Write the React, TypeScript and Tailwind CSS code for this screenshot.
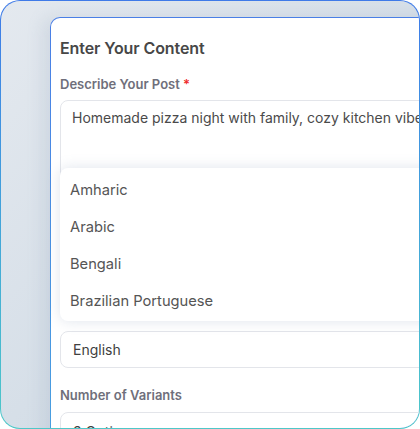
import React from "react";

export default function App() {
  const items = ["Amharic", "Arabic", "Bengali", "Brazilian Portuguese"];
  return (
    <div
      className="w-[420px] h-[429px] rounded-[20px] p-px bg-gradient-to-b from-[#3f7ae8] to-[#4ec8c8] overflow-hidden"
      style={{ fontFamily: "Inter, 'Noto Sans', sans-serif" }}
    >
      <div className="w-full h-full rounded-[19px] overflow-hidden bg-gradient-to-br from-[#e4e9ef] via-[#d6dfe8] to-[#ccd7e2] pl-[49px] pt-[16px]">
        <div className="w-[420px] h-[520px] rounded-tl-[10px] p-px pr-0 pb-0 bg-gradient-to-b from-[#4a7fe6] to-[#47a6de] shadow-[-8px_0_16px_rgba(120,140,170,0.15)]">
          <div className="relative w-full h-full rounded-tl-[9px] bg-white pl-[9px] pt-[19px]">
            <div className="text-[16px] leading-[22px] font-semibold text-[#474747] tracking-[-0.1px]">
              Enter Your Content
            </div>
            <div className="mt-[15px] text-[13px] leading-[20px] font-semibold text-[#6f6f7b] mb-[6px]">
              Describe Your Post <span className="text-[#ef2b2b]">*</span>
            </div>
            <div className="h-[176px] w-[400px] rounded-[8px] border border-[#e3e5ea] px-[11px] pt-[7px] text-[14px] leading-[20px] text-[#4a4a4a] whitespace-nowrap overflow-hidden">
              Homemade pizza night with family, cozy kitchen vibes
            </div>
            <div className="mt-[16px] h-[20px] mb-[19px] text-[13px] leading-[20px] font-semibold text-[#6f6f7b]">
              Output Language
            </div>
            <div className="h-[37px] w-[400px] rounded-[8px] border border-[#e3e5ea] pl-[12px] flex items-center text-[14px] text-[#404040]">
              English
            </div>
            <div className="mt-[17px] mb-[7px] text-[13px] leading-[20px] font-semibold text-[#6f6f7b]">
              Number of Variants
            </div>
            <div className="h-[37px] w-[400px] rounded-[8px] border border-[#e3e5ea] pl-[12px] pt-[9px] text-[14px] leading-[20px] text-[#404040]">
              3 Options
            </div>

            <div className="absolute left-[9px] top-[150px] w-[400px] h-[153px] rounded-[8px] bg-white shadow-[0_0_14px_rgba(110,130,170,0.22)] pt-[4px]">
              {items.map((it) => (
                <div
                  key={it}
                  className="h-[37px] pl-[10px] flex items-center text-[14.7px] text-[#555555]"
                >
                  {it}
                </div>
              ))}
            </div>
          </div>
        </div>
      </div>
    </div>
  );
}
